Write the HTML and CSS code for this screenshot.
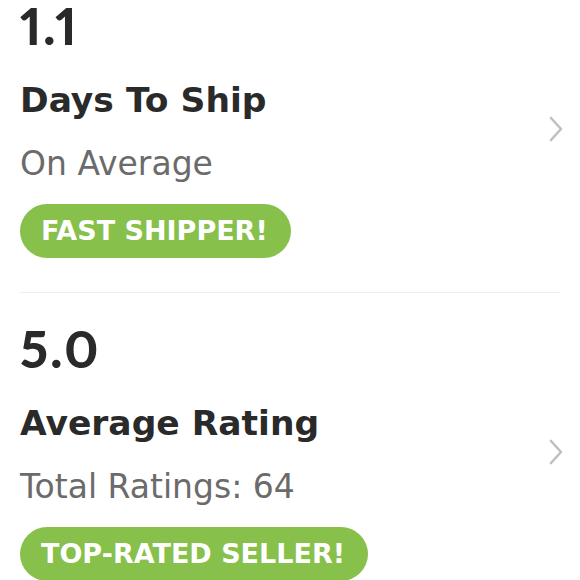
FILE: index.html
```html
<!DOCTYPE html>
<html>
<head>
<meta charset="utf-8">
<link rel="stylesheet" href="styles.css">
</head>
<body>
<div class="stats">
  <div class="stat">
    <div class="info">
      <div class="value">1.1</div>
      <div class="title">Days To Ship</div>
      <div class="sub">On Average</div>
      <span class="badge">FAST SHIPPER!</span>
    </div>
    <svg class="chev" viewBox="0 0 16 26" width="16" height="26"><path d="M3 2 L13 13 L3 24" fill="none" stroke="#c0c0c0" stroke-width="2.6" stroke-linecap="round" stroke-linejoin="round"/></svg>
  </div>
  <div class="stat">
    <div class="info">
      <div class="value">5.0</div>
      <div class="title">Average Rating</div>
      <div class="sub">Total Ratings: 64</div>
      <span class="badge">TOP-RATED SELLER!</span>
    </div>
    <svg class="chev" viewBox="0 0 16 26" width="16" height="26"><path d="M3 2 L13 13 L3 24" fill="none" stroke="#c0c0c0" stroke-width="2.6" stroke-linecap="round" stroke-linejoin="round"/></svg>
  </div>
</div>
</body>
</html>
```
FILE: styles.css
```css
html, body {
  margin: 0;
  padding: 0;
  background: #ffffff;
  overflow: hidden;
}
body {
  font-family: "DejaVu Sans", Lato, sans-serif;
  color: #2a2a2a;
}
.stats {
  margin: -30px 20px 0 20px;
}
.stat {
  display: flex;
  align-items: center;
  padding: 30px 0 34px 0;
  border-bottom: 1px solid #efefed;
}
.info {
  flex: 1;
  display: flex;
  flex-direction: column;
  align-items: flex-start;
}
.value {
  font-family: Lato, "DejaVu Sans", sans-serif;
  font-variant-numeric: proportional-nums;
  font-size: 51px;
  font-weight: 900;
  line-height: 52px;
  letter-spacing: 2px;
}
.title {
  margin-top: 26px;
  font-size: 34.5px;
  font-weight: 700;
  line-height: 44px;
}
.sub {
  margin-top: 21.5px;
  font-size: 33px;
  font-weight: 400;
  line-height: 40px;
  color: #6b6b6b;
}
.badge {
  margin-top: 20.5px;
  height: 54px;
  line-height: 54px;
  padding: 0 23px 0 21px;
  border-radius: 27px;
  background: #87c04b;
  color: #ffffff;
  font-size: 27px;
  font-weight: 700;
}
.chev {
  margin-right: -4px;
  flex: none;
}
```
